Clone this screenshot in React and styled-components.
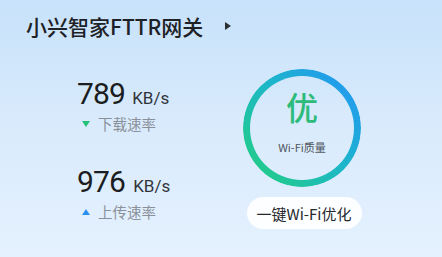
import React from "react";
import styled, { createGlobalStyle } from "styled-components";

const Global = createGlobalStyle`
  html, body { margin: 0; padding: 0; }
  body { font-family: "Noto Sans CJK SC", "Noto Sans", sans-serif; }
  * { box-sizing: border-box; }
`;

const Page = styled.div`
  width: 442px;
  height: 257px;
  padding: 15px 0 0 26px;
  background: linear-gradient(180deg, #c7e2fa 0%, #d8eafc 45%, #e5f1fe 100%);
  display: flex;
  flex-direction: column;
  overflow: hidden;
`;

const Header = styled.div`
  display: flex;
  align-items: center;
  height: 22px;
`;

const Title = styled.h1`
  margin: 0;
  font-family: "Noto Sans CJK SC", sans-serif;
  font-size: 21px;
  line-height: 22px;
  font-weight: 500;
  color: #1e2227;
`;

const Caret = styled.span`
  margin-left: 22px;
  width: 0;
  height: 0;
  border-top: 4px solid transparent;
  border-bottom: 4px solid transparent;
  border-left: 6px solid #2b2f33;
`;

const Body = styled.div`
  display: flex;
  margin-top: 32px;
`;

const Stats = styled.div`
  width: 165px;
  margin-left: 51px;
  padding-top: 8px;
  display: flex;
  flex-direction: column;
  gap: 31px;
`;

const Stat = styled.div`
  display: flex;
  flex-direction: column;
`;

const ValueRow = styled.div`
  display: flex;
  align-items: baseline;
  height: 34px;
`;

const Value = styled.span`
  font-family: Roboto, "Noto Sans", sans-serif;
  font-size: 30px;
  line-height: 34px;
  letter-spacing: -0.8px;
  color: #1b1d20;
`;

const Unit = styled.span`
  margin-left: ${(p) => p.$gap}px;
  font-family: Roboto, "Noto Sans", sans-serif;
  font-size: 17px;
  color: #30343a;
`;

const Label = styled.div`
  margin-top: 3px;
  display: flex;
  align-items: center;
  height: 20px;
  font-family: "Noto Sans CJK SC", sans-serif;
  font-size: 14.5px;
  line-height: 20px;
  color: #8a9099;
`;

const Arrow = styled.span`
  width: 0;
  height: 0;
  margin: 0 8px 0 5px;
  border-left: 4.5px solid transparent;
  border-right: 4.5px solid transparent;
  ${(p) =>
    p.$up
      ? `border-bottom: 6px solid ${p.$color};`
      : `border-top: 6px solid ${p.$color};`}
`;

const Side = styled.div`
  width: 120px;
  display: flex;
  flex-direction: column;
  align-items: center;
`;

const Ring = styled.div`
  position: relative;
  width: 118px;
  height: 118px;
  padding-top: 20px;
  display: flex;
  flex-direction: column;
  align-items: center;
  &::before {
    content: "";
    position: absolute;
    inset: 0;
    border-radius: 50%;
    padding: 7px;
    background: linear-gradient(228deg, #2399f0 10%, #1db5cc 45%, #22cc88 90%);
    -webkit-mask: linear-gradient(#000 0 0) content-box, linear-gradient(#000 0 0);
    -webkit-mask-composite: xor;
    mask-composite: exclude;
  }
`;

const Grade = styled.div`
  font-family: "Noto Sans CJK SC", sans-serif;
  font-size: 32px;
  line-height: 34px;
  font-weight: 500;
  color: #2dbb7b;
`;

const GradeLabel = styled.div`
  margin-top: 17px;
  font-family: "Noto Sans CJK SC", sans-serif;
  font-size: 11px;
  line-height: 14px;
  color: #4f555c;
`;

const OptimizeButton = styled.button`
  margin-top: 10px;
  margin-left: 4px;
  width: 115px;
  height: 32px;
  border: none;
  border-radius: 16px;
  background: #fdfeff;
  font-family: "Noto Sans CJK SC", sans-serif;
  font-size: 15px;
  font-weight: 400;
  color: #25292e;
  padding: 0;
  display: flex;
  align-items: center;
  justify-content: center;
`;

function SpeedStat({ value, gap, label, up, color }) {
  return (
    <Stat>
      <ValueRow>
        <Value>{value}</Value>
        <Unit $gap={gap}>KB/s</Unit>
      </ValueRow>
      <Label>
        <Arrow $up={up} $color={color} />
        {label}
      </Label>
    </Stat>
  );
}

export default function App() {
  return (
    <>
      <Global />
      <Page>
        <Header>
          <Title>小兴智家FTTR网关</Title>
          <Caret />
        </Header>
        <Body>
          <Stats>
            <SpeedStat value="789" gap={7} label="下载速率" color="#22c277" />
            <SpeedStat value="976" gap={8} label="上传速率" up color="#2b8ff0" />
          </Stats>
          <Side>
            <Ring>
              <Grade>优</Grade>
              <GradeLabel>Wi-Fi质量</GradeLabel>
            </Ring>
            <OptimizeButton>一键Wi-Fi优化</OptimizeButton>
          </Side>
        </Body>
      </Page>
    </>
  );
}
